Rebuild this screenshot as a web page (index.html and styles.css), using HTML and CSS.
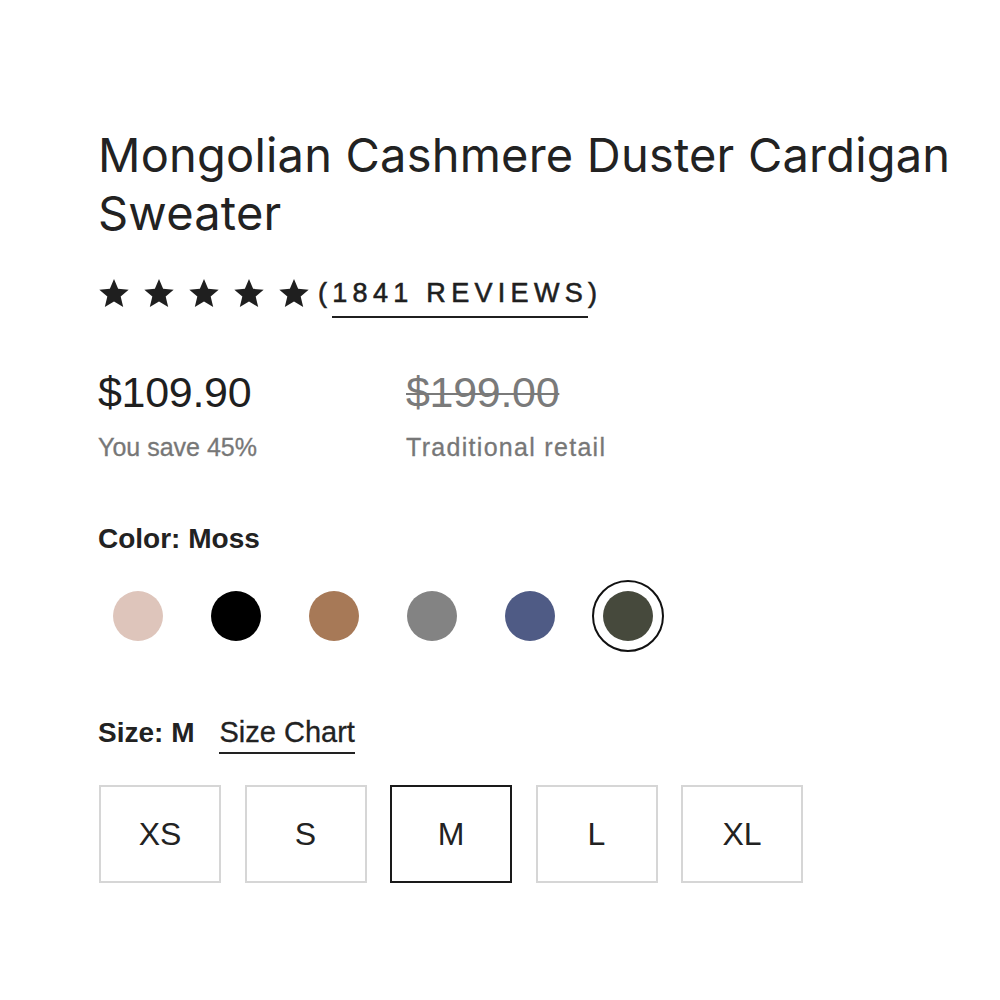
FILE: index.html
```html
<!DOCTYPE html>
<html>
<head>
<meta charset="utf-8">
<link rel="stylesheet" href="styles.css">
</head>
<body>
<main class="product">
  <h1 class="title">Mongolian Cashmere Duster Cardigan Sweater</h1>
  <div class="rating">
    <div class="stars">
      <svg class="star" viewBox="0 0 24 24"><path d="M12 1.5l3.1 7.4 7.9.6-6 5.2 1.9 7.8L12 18.3l-6.9 4.2 1.9-7.8-6-5.2 7.9-.6z"/></svg>
      <svg class="star" viewBox="0 0 24 24"><path d="M12 1.5l3.1 7.4 7.9.6-6 5.2 1.9 7.8L12 18.3l-6.9 4.2 1.9-7.8-6-5.2 7.9-.6z"/></svg>
      <svg class="star" viewBox="0 0 24 24"><path d="M12 1.5l3.1 7.4 7.9.6-6 5.2 1.9 7.8L12 18.3l-6.9 4.2 1.9-7.8-6-5.2 7.9-.6z"/></svg>
      <svg class="star" viewBox="0 0 24 24"><path d="M12 1.5l3.1 7.4 7.9.6-6 5.2 1.9 7.8L12 18.3l-6.9 4.2 1.9-7.8-6-5.2 7.9-.6z"/></svg>
      <svg class="star" viewBox="0 0 24 24"><path d="M12 1.5l3.1 7.4 7.9.6-6 5.2 1.9 7.8L12 18.3l-6.9 4.2 1.9-7.8-6-5.2 7.9-.6z"/></svg>
    </div>
    <span class="reviews">(<span class="reviews-link">1841 REVIEWS</span>)</span>
  </div>
  <div class="prices">
    <div class="price-col">
      <div class="price">$109.90</div>
      <div class="price-note">You save 45%</div>
    </div>
    <div class="price-col">
      <div class="price old">$199.00</div>
      <div class="price-note wide">Traditional retail</div>
    </div>
  </div>
  <div class="label color-label">Color: Moss</div>
  <div class="swatches">
    <span class="swatch"><span class="dot" style="background:#dec5bb"></span></span>
    <span class="swatch"><span class="dot" style="background:#000000"></span></span>
    <span class="swatch"><span class="dot" style="background:#a77957"></span></span>
    <span class="swatch"><span class="dot" style="background:#838383"></span></span>
    <span class="swatch"><span class="dot" style="background:#4f5b85"></span></span>
    <span class="swatch selected"><span class="dot" style="background:#46493c"></span></span>
  </div>
  <div class="size-row">
    <span class="label">Size: M</span>
    <span class="size-chart">Size Chart</span>
  </div>
  <div class="sizes">
    <div class="size">XS</div>
    <div class="size">S</div>
    <div class="size active">M</div>
    <div class="size">L</div>
    <div class="size">XL</div>
  </div>
</main>
</body>
</html>
```
FILE: styles.css
```css
html, body {
  margin: 0;
  background: #ffffff;
}
.product {
  padding: 126px 0 0 98px;
  color: #1f1f1f;
  font-family: "Liberation Sans", Arial, sans-serif;
}
.title {
  margin: 0;
  font-family: "Inter", "Liberation Sans", sans-serif;
  font-size: 47px;
  font-weight: 400;
  line-height: 58px;
  color: #222;
  letter-spacing: 0.2px;
}
.rating {
  display: flex;
  align-items: center;
  margin-top: 31px;
  height: 40px;
}
.stars {
  display: flex;
  gap: 13px;
}
.star {
  width: 32px;
  height: 32px;
  fill: #1f1f1f;
}
.reviews {
  margin-left: 8px;
  font-size: 27px;
  letter-spacing: 5.3px;
  color: #1f1f1f;
  -webkit-text-stroke: 0.6px #1f1f1f;
}
.reviews-link {
  border-bottom: 2px solid #1f1f1f;
  padding-bottom: 8px;
}
.prices {
  display: flex;
  margin-top: 54px;
}
.price-col {
  width: 308px;
}
.price {
  font-size: 43px;
  line-height: 50px;
  color: #1f1f1f;
  letter-spacing: -0.3px;
}
.price.old {
  color: #7a7a7a;
  text-decoration: line-through;
  text-decoration-thickness: 2px;
}
.price-note {
  margin-top: 16px;
  font-size: 25px;
  line-height: 28px;
  color: #777;
  -webkit-text-stroke: 0.3px #777;
}
.price-note.wide {
  letter-spacing: 1.3px;
}
.label {
  font-weight: 700;
  font-size: 28px;
  color: #222;
}
.color-label {
  margin-top: 62px;
}
.swatches {
  display: flex;
  gap: 26px;
  margin-top: 25px;
  margin-left: 4px;
}
.swatch {
  width: 72px;
  height: 72px;
  border-radius: 50%;
  display: flex;
  align-items: center;
  justify-content: center;
  box-sizing: border-box;
}
.swatch.selected {
  border: 2.5px solid #111;
}
.dot {
  width: 50px;
  height: 50px;
  border-radius: 50%;
}
.size-row {
  display: flex;
  align-items: baseline;
  gap: 25px;
  margin-top: 64px;
}
.size-chart {
  font-size: 29px;
  color: #222;
  -webkit-text-stroke: 0.3px #222;
  border-bottom: 2px solid #222;
  padding-bottom: 3px;
}
.sizes {
  display: flex;
  gap: 23.5px;
  margin-top: 31px;
  margin-left: 1px;
}
.size {
  width: 122px;
  height: 98px;
  box-sizing: border-box;
  border: 2px solid #d6d6d6;
  display: flex;
  align-items: center;
  justify-content: center;
  font-size: 32px;
  color: #222;
}
.size.active {
  border-color: #1a1a1a;
}
```
